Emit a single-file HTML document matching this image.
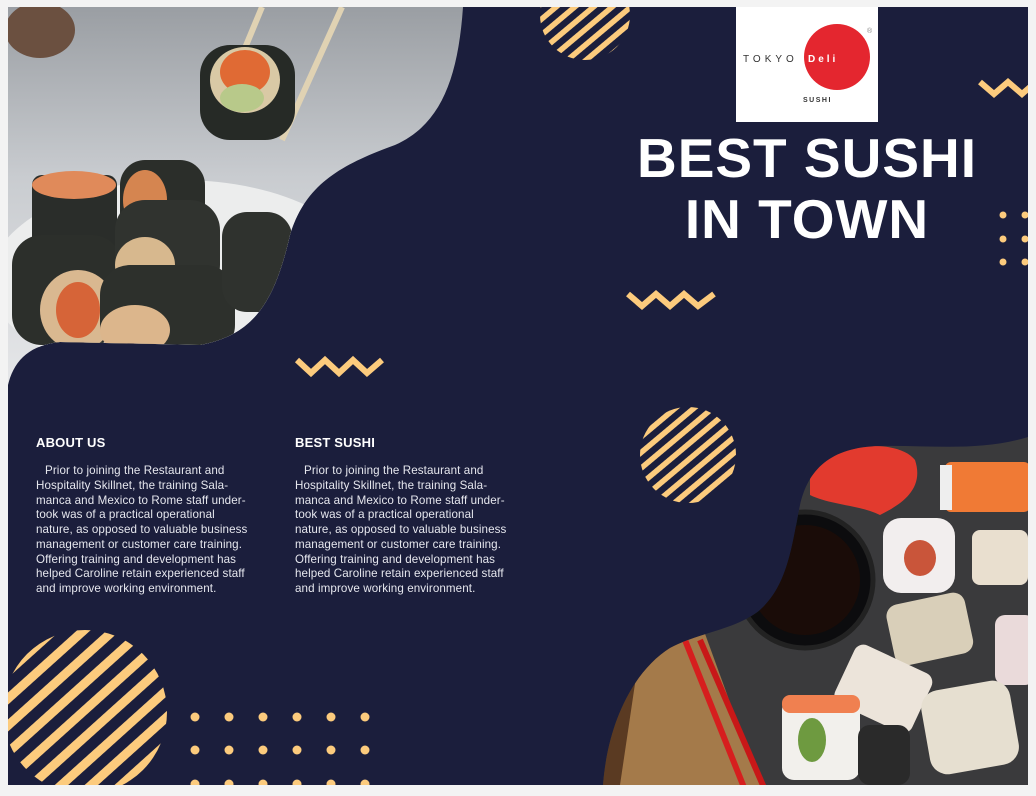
<!DOCTYPE html>
<html><head><meta charset="utf-8"><style>
html,body{margin:0;padding:0;background:#f3f3f3;}
body{width:1036px;height:796px;overflow:hidden;position:relative;font-family:"Liberation Sans",sans-serif;}
svg{position:absolute;left:0;top:0;}
.col{position:absolute;top:435px;width:230px;color:#e6e7ee;}
.col h3{margin:0 0 13px 0;font-size:13px;line-height:16px;font-weight:bold;color:#fff;letter-spacing:0.2px;}
.col p{margin:0;font-size:11.6px;line-height:14.75px;text-indent:9px;letter-spacing:0.1px;}
.title{position:absolute;left:600px;width:414px;top:128px;text-align:center;color:#fff;font-weight:bold;font-size:55px;line-height:61px;letter-spacing:1px;}
</style></head><body>
<svg width="1036" height="796" viewBox="0 0 1036 796">
<defs>
<pattern id="st" width="12" height="12" patternUnits="userSpaceOnUse" patternTransform="rotate(-40)">
<rect width="12" height="5.5" fill="#fccb7d"/></pattern>
<pattern id="st2" width="20" height="20" patternUnits="userSpaceOnUse" patternTransform="rotate(-42)">
<rect width="20" height="9" fill="#fccb7d"/></pattern>
<linearGradient id="bg1" x1="0" y1="0" x2="0" y2="1"><stop offset="0" stop-color="#9a9ea3"/><stop offset="0.45" stop-color="#c9ccd0"/><stop offset="1" stop-color="#e6e7e9"/></linearGradient>
<clipPath id="c1"><path d="M8,7 L463,7 C458,80 440,125 395,145 C340,165 305,185 290,235 C275,300 255,335 200,345 L60,342 C30,345 14,360 8,385 Z"/></clipPath>
<clipPath id="c2"><path d="M1028,437 C980,452 930,445 880,446 C830,447 808,470 800,505 C792,545 788,585 760,610 C735,630 700,632 670,648 C635,670 608,720 603,785 L1028,785 Z"/></clipPath>
<clipPath id="page"><rect x="8" y="7" width="1020" height="778"/></clipPath>
</defs>
<rect x="8" y="7" width="1020" height="778" fill="#1b1e3c"/>
<g clip-path="url(#c1)">
<rect x="8" y="7" width="460" height="380" fill="url(#bg1)"/>
<ellipse cx="40" cy="30" rx="35" ry="28" fill="#6b5040"/>
<ellipse cx="180" cy="280" rx="190" ry="100" fill="#eceded"/>
<line x1="262" y1="7" x2="240" y2="60" stroke="#e0d2b3" stroke-width="6"/>
<line x1="342" y1="7" x2="282" y2="140" stroke="#e0d2b3" stroke-width="6"/>
<rect x="200" y="45" width="95" height="95" rx="30" fill="#262a26"/>
<ellipse cx="245" cy="80" rx="35" ry="33" fill="#d9c9a5"/>
<ellipse cx="245" cy="72" rx="25" ry="22" fill="#e06a34"/>
<ellipse cx="242" cy="98" rx="22" ry="14" fill="#b8c98a"/>
<rect x="32" y="175" width="85" height="95" rx="10" fill="#2a2d2a"/>
<ellipse cx="74" cy="185" rx="42" ry="14" fill="#e08a5a"/>
<rect x="120" y="160" width="85" height="110" rx="25" fill="#2b2e2a"/>
<ellipse cx="145" cy="200" rx="22" ry="30" fill="#d58550"/>
<rect x="12" y="235" width="110" height="110" rx="30" fill="#2c2f2b"/>
<ellipse cx="78" cy="310" rx="38" ry="40" fill="#d9b890"/>
<ellipse cx="78" cy="310" rx="22" ry="28" fill="#d66438"/>
<rect x="115" y="200" width="105" height="95" rx="30" fill="#30332f"/>
<ellipse cx="145" cy="265" rx="30" ry="28" fill="#d7b88e"/>
<rect x="100" y="265" width="135" height="90" rx="30" fill="#2d302c"/>
<ellipse cx="135" cy="330" rx="35" ry="25" fill="#dcb68c"/>
<rect x="222" y="212" width="70" height="100" rx="25" fill="#2f322e"/>
</g>
<g clip-path="url(#c2)">
<rect x="600" y="430" width="430" height="360" fill="#3a3a3c"/>
<rect x="600" y="640" width="80" height="150" fill="#5a3a22"/>
<polygon points="640,650 700,620 760,785 620,785" fill="#a47a4a"/>
<circle cx="805" cy="580" r="68" fill="#0c0c0e" stroke="#222" stroke-width="5"/>
<circle cx="805" cy="580" r="55" fill="#1a0c08"/>
<path d="M810,470 C840,440 900,440 915,460 C925,490 900,505 880,515 C860,505 830,505 810,495 Z" fill="#e23a2e"/>
<rect x="945" y="462" width="85" height="50" rx="6" fill="#f07a35"/>
<rect x="940" y="465" width="12" height="45" fill="#eee"/>
<rect x="883" y="518" width="72" height="75" rx="18" fill="#f2eeee"/>
<ellipse cx="920" cy="558" rx="16" ry="18" fill="#c9553a"/>
<rect x="972" y="530" width="56" height="55" rx="8" fill="#e9dfcf"/>
<rect x="890" y="598" width="80" height="62" rx="12" transform="rotate(-12 930 630)" fill="#d9cfb9"/>
<rect x="995" y="615" width="40" height="70" rx="10" fill="#eadada"/>
<line x1="685" y1="640" x2="745" y2="790" stroke="#d61e1e" stroke-width="6"/>
<line x1="700" y1="640" x2="765" y2="790" stroke="#c81818" stroke-width="6"/>
<rect x="840" y="655" width="85" height="65" rx="10" transform="rotate(25 880 690)" fill="#ece4da"/>
<rect x="925" y="685" width="90" height="85" rx="18" transform="rotate(-10 970 727)" fill="#e6dfd0"/>
<rect x="782" y="698" width="78" height="82" rx="12" fill="#f2f0ec"/>
<rect x="782" y="695" width="78" height="18" rx="8" fill="#f08050"/>
<ellipse cx="812" cy="740" rx="14" ry="22" fill="#6e9a40"/>
<rect x="858" y="725" width="52" height="60" rx="12" fill="#2a2a2a"/>
</g>
<g clip-path="url(#page)">
<circle cx="585" cy="15" r="45" fill="url(#st)"/>
<circle cx="688" cy="455" r="48" fill="url(#st)"/>
<circle cx="85" cy="712" r="82" fill="url(#st2)"/>
<polyline points="297,360 311,373 325,360 339,373 353,360 367,373 382,360" fill="none" stroke="#fccb7d" stroke-width="6"/>
<polyline points="628,294 642,306 656,294 670,306 684,294 698,306 714,294" fill="none" stroke="#fccb7d" stroke-width="6"/>
<polyline points="980,82 994,94 1008,82 1022,94 1036,82" fill="none" stroke="#fccb7d" stroke-width="6"/>
<g fill="#fccb7d">
<circle cx="195" cy="717" r="4.5"/><circle cx="229" cy="717" r="4.5"/><circle cx="263" cy="717" r="4.5"/><circle cx="297" cy="717" r="4.5"/><circle cx="331" cy="717" r="4.5"/><circle cx="365" cy="717" r="4.5"/>
<circle cx="195" cy="750" r="4.5"/><circle cx="229" cy="750" r="4.5"/><circle cx="263" cy="750" r="4.5"/><circle cx="297" cy="750" r="4.5"/><circle cx="331" cy="750" r="4.5"/><circle cx="365" cy="750" r="4.5"/>
<circle cx="195" cy="784" r="4.5"/><circle cx="229" cy="784" r="4.5"/><circle cx="263" cy="784" r="4.5"/><circle cx="297" cy="784" r="4.5"/><circle cx="331" cy="784" r="4.5"/><circle cx="365" cy="784" r="4.5"/>
<circle cx="1003" cy="215" r="3.5"/><circle cx="1025" cy="215" r="3.5"/>
<circle cx="1003" cy="239" r="3.5"/><circle cx="1025" cy="239" r="3.5"/>
<circle cx="1003" cy="262" r="3.5"/><circle cx="1025" cy="262" r="3.5"/>
</g>
</g>
<rect x="736" y="7" width="142" height="115" fill="#fff"/>
<circle cx="837" cy="57" r="33" fill="#e4262f"/>
<text x="743" y="62" font-family="Liberation Sans" font-size="10" fill="#333" letter-spacing="4">TOKYO</text>
<text x="808" y="62" font-family="Liberation Sans" font-size="10" font-weight="bold" fill="#fff" letter-spacing="3">Deli</text>
<text x="867" y="33" font-family="Liberation Sans" font-size="7" fill="#888">®</text>
<text x="803" y="102" font-family="Liberation Sans" font-size="7" font-weight="bold" fill="#333" letter-spacing="1.5">SUSHI</text>
</svg>
<div class="title">BEST SUSHI<br>IN TOWN</div>
<div class="col" style="left:36px"><h3>ABOUT US</h3><p>Prior to joining the Restaurant and<br>Hospitality Skillnet, the training Sala-<br>manca and Mexico to Rome staff under-<br>took was of a practical operational<br>nature, as opposed to valuable business<br>management or customer care training.<br>Offering training and development has<br>helped Caroline retain experienced staff<br>and improve working environment.</p></div>
<div class="col" style="left:295px"><h3>BEST SUSHI</h3><p>Prior to joining the Restaurant and<br>Hospitality Skillnet, the training Sala-<br>manca and Mexico to Rome staff under-<br>took was of a practical operational<br>nature, as opposed to valuable business<br>management or customer care training.<br>Offering training and development has<br>helped Caroline retain experienced staff<br>and improve working environment.</p></div>
</body></html>
